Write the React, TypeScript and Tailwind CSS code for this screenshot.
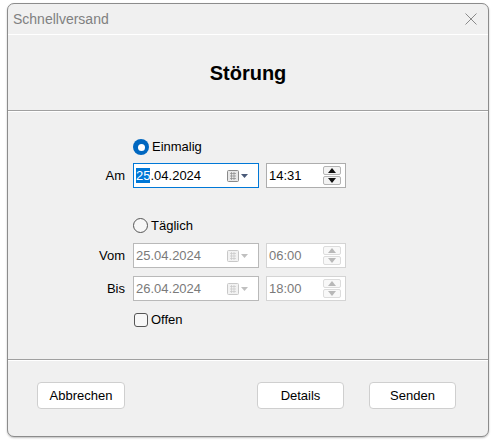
import React from 'react';

const font = { fontFamily: '"Liberation Sans", Arial, sans-serif' };

const CalendarIcon: React.FC<{ disabled?: boolean }> = ({ disabled }) => {
  const c = disabled ? '#c8c8c8' : '#8a8a8a';
  const a = disabled ? '#c0c0c0' : '#4a5a78';
  return (
    <svg width="22" height="12" viewBox="0 0 22 12">
      <rect x="0.5" y="0.5" width="11" height="11" rx="1" fill={disabled ? '#f2f2f2' : '#e8e8e8'} stroke={c} />
      <path d="M3 3.5h6M3 6h6M3 8.5h6M4.5 2v8M7 2v8" stroke={c} strokeWidth="0.7" />
      <path d="M14 4h7l-3.5 4z" fill={a} />
    </svg>
  );
};

const Spin: React.FC<{ disabled?: boolean }> = ({ disabled }) => {
  const c = disabled ? '#b8b8b8' : '#111';
  const b = disabled ? '#dcdcdc' : '#b4b4b4';
  return (
    <div className="flex flex-col gap-[1px] mr-[4px]">
      <div className="w-[18px] h-[9px] rounded-[2px] border flex items-center justify-center" style={{ borderColor: b, background: disabled ? '#f8f8f8' : '#f3f3f3' }}>
        <svg width="8" height="5" viewBox="0 0 8 5"><path d="M0 5h8L4 0z" fill={c} /></svg>
      </div>
      <div className="w-[18px] h-[9px] rounded-[2px] border flex items-center justify-center" style={{ borderColor: b, background: disabled ? '#f8f8f8' : '#f3f3f3' }}>
        <svg width="8" height="5" viewBox="0 0 8 5"><path d="M0 0h8L4 5z" fill={c} /></svg>
      </div>
    </div>
  );
};

const DateRow: React.FC<{ label: string; date: string; time: string; active?: boolean }> = ({ label, date, time, active }) => (
  <div className="flex items-center h-[25px]">
    <div className="w-[117px] text-right text-[13px] text-black">{label}</div>
    <div
      className={`ml-[8px] w-[126px] h-[25px] flex items-center justify-between bg-white border ${active ? 'border-[#0078d7]' : 'border-[#b9b9b9]'}`}
    >
      <div className={`pl-[2px] text-[13px] ${active ? 'text-black' : 'text-[#7a7a7a]'}`}>
        {active ? (
          <>
            <span className="bg-[#0078d7] text-white">{date.slice(0, 2)}</span>
            {date.slice(2)}
          </>
        ) : (
          date
        )}
      </div>
      <div className="mr-[9px] flex items-center">
        <CalendarIcon disabled={!active} />
      </div>
    </div>
    <div className={`ml-[7px] w-[80px] h-[25px] flex items-center justify-between bg-white border ${active ? 'border-[#adadad]' : 'border-[#d4d4d4]'}`}>
      <span className={`pl-[2px] text-[13px] ${active ? 'text-black' : 'text-[#7a7a7a]'}`}>{time}</span>
      <Spin disabled={!active} />
    </div>
  </div>
);

export default function App() {
  return (
    <div className="w-[494px] h-[443px] bg-white pt-[3px] pl-[7px]" style={font}>
      <div className="w-[482px] h-[434px] rounded-[7px] border border-[#8c8c8c] bg-[#f0f0f0] flex flex-col overflow-hidden shadow-[0_1px_2px_rgba(0,0,0,0.25)]">
        {/* Title bar */}
        <div className="h-[30px] flex items-center justify-between pl-[5px] pr-[11px]">
          <span className="text-[14px] text-[#808080]">Schnellversand</span>
          <svg width="12" height="12" viewBox="0 0 12 12">
            <path d="M0.5 0.5l11 11M11.5 0.5l-11 11" stroke="#8a8a8a" strokeWidth="1" />
          </svg>
        </div>

        {/* Header */}
        <div className="h-[77px] border-t border-white border-b border-b-[#a0a0a0] flex items-center justify-center">
          <span className="text-[20px] font-bold text-black">Störung</span>
        </div>

        {/* Body */}
        <div className="flex-1 border-t border-white border-b border-b-[#a0a0a0] flex flex-col pt-[27px]">
          <div className="flex items-center ml-[125px] h-[16px]">
            <div className="w-[16px] h-[16px] rounded-full bg-[#0067c0] flex items-center justify-center">
              <div className="w-[7px] h-[7px] rounded-full bg-white" />
            </div>
            <span className="ml-[3px] text-[13px] text-black">Einmalig</span>
          </div>
          <div className="mt-[8px]">
            <DateRow label="Am" date="25.04.2024" time="14:31" active />
          </div>

          <div className="flex items-center ml-[125px] h-[15px] mt-[30px]">
            <div className="w-[15px] h-[15px] rounded-full border border-[#555] bg-[#f7f7f7]" />
            <span className="ml-[3px] text-[13px] text-black">Täglich</span>
          </div>
          <div className="mt-[10px]">
            <DateRow label="Vom" date="25.04.2024" time="06:00" />
          </div>
          <div className="mt-[8px]">
            <DateRow label="Bis" date="26.04.2024" time="18:00" />
          </div>
          <div className="flex items-center ml-[126px] h-[14px] mt-[12px]">
            <div className="w-[14px] h-[14px] rounded-[3px] border border-[#555] bg-[#f7f7f7]" />
            <span className="ml-[3px] text-[13px] text-black">Offen</span>
          </div>
        </div>

        {/* Footer */}
        <div className="h-[76px] border-t border-white flex items-start pt-[21px] pl-[29px] pr-[32px]">
          <button className="w-[88px] h-[27px] bg-white border border-[#cfcfcf] rounded-[4px] text-[13px] text-black">Abbrechen</button>
          <div className="flex-1" />
          <button className="w-[87px] h-[27px] bg-white border border-[#cfcfcf] rounded-[4px] text-[13px] text-black">Details</button>
          <button className="ml-[25px] w-[87px] h-[27px] bg-white border border-[#cfcfcf] rounded-[4px] text-[13px] text-black">Senden</button>
        </div>
      </div>
    </div>
  );
}
